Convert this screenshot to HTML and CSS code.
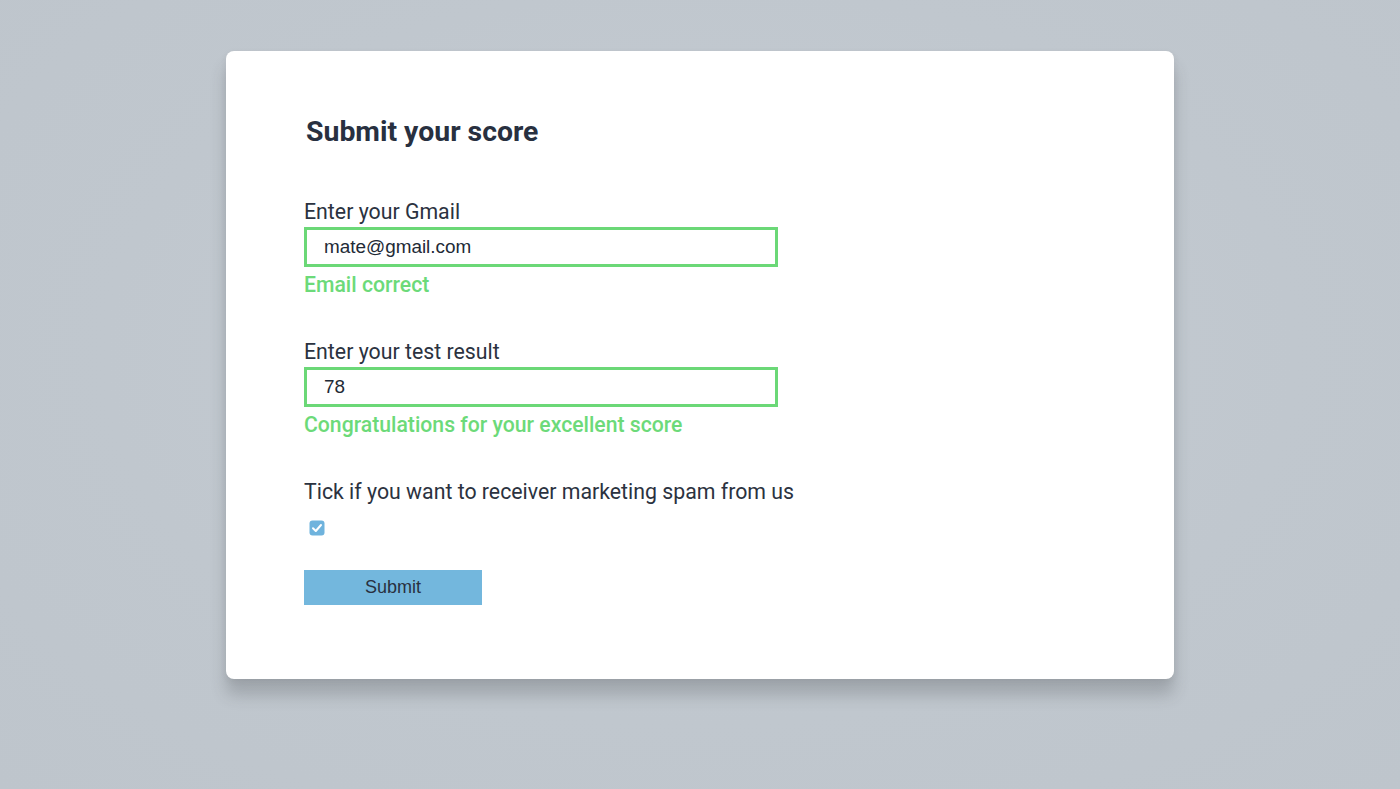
FILE: index.html
```html
<!DOCTYPE html>
<html lang="en">
<head>
<meta charset="utf-8">
<title>Submit your score</title>
<link rel="stylesheet" href="styles.css">
</head>
<body>
<main class="page">
  <form class="card">
    <h1 class="title">Submit your score</h1>
    <div class="field">
      <label class="label" for="email">Enter your Gmail</label>
      <input class="input" id="email" type="text" value="mate@gmail.com">
      <p class="ok">Email correct</p>
    </div>
    <div class="field">
      <label class="label" for="score">Enter your test result</label>
      <input class="input" id="score" type="text" value="78">
      <p class="ok">Congratulations for your excellent score</p>
    </div>
    <div class="field check-field">
      <label class="label" for="spam">Tick if you want to receiver marketing spam from us</label>
      <span class="check" id="spam">
        <svg viewBox="0 0 16 16" width="16" height="16"><rect x="0.5" y="0.5" width="15" height="15" rx="3" fill="#6fb3dd"/><path d="M4 8.3 L6.8 11 L12 5" fill="none" stroke="#fff" stroke-width="2" stroke-linecap="round" stroke-linejoin="round"/></svg>
      </span>
    </div>
    <button class="submit" type="button">Submit</button>
  </form>
</main>
</body>
</html>
```
FILE: styles.css
```css
html, body {
  margin: 0;
  padding: 0;
}
body {
  background: #c2c9cf;
  font-family: Roboto, "Liberation Sans", sans-serif;
  color: #2b3240;
}
.page {
  width: 1400px;
  height: 789px;
  display: flex;
  justify-content: center;
  padding-top: 51px;
  box-sizing: border-box;
  background: radial-gradient(ellipse at 50% 45%, #c6ccd3 0%, #c0c7ce 60%, #bec5cc 100%);
}
.card {
  width: 948px;
  height: 628px;
  box-sizing: border-box;
  background: #fff;
  border-radius: 8px;
  box-shadow: 0 16px 16px rgba(60, 64, 68, 0.24), 0 2px 6px rgba(60, 64, 68, 0.08);
  padding: 63px 78px 0 78px;
  display: flex;
  flex-direction: column;
  align-items: flex-start;
}
.title {
  margin: 0 0 0 2px;
  font-size: 28.4px;
  line-height: 36px;
  font-weight: 700;
  color: #283040;
}
.field {
  display: flex;
  flex-direction: column;
  align-items: flex-start;
}
.field:first-of-type {
  margin-top: 50px;
}
.field + .field {
  margin-top: 43px;
}
.label {
  font-size: 21.3px;
  line-height: 24px;
  color: #2b3240;
}
.input {
  margin-top: 3px;
  width: 474px;
  height: 40px;
  box-sizing: border-box;
  border: 3px solid #6bd877;
  background: #fff;
  padding: 0 0 0 17px;
  font-family: "Liberation Sans", Arial, sans-serif;
  font-size: 18.9px;
  color: #222a36;
  outline: none;
}
.ok {
  margin: 6px 0 0 0;
  font-size: 21.2px;
  line-height: 24px;
  font-weight: 500;
  color: #6cda79;
}
.check-field .label {
  margin-bottom: 16px;
}
.check {
  display: block;
  width: 16px;
  height: 16px;
  margin-left: 5px;
}
.check svg {
  display: block;
}
.submit {
  margin-top: 34px;
  width: 178px;
  height: 35px;
  border: none;
  border-radius: 0;
  background: #73b7dd;
  font-family: "Liberation Sans", Arial, sans-serif;
  font-size: 18px;
  color: #283040;
  padding: 0;
}
```
